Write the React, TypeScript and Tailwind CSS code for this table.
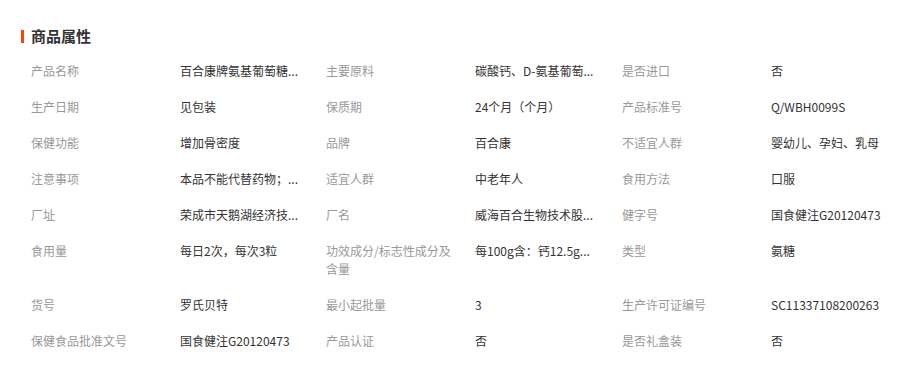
import * as React from 'react'

type Attr = { label: string; value: string }

// values are shown as the page shows them: cut short with "..."
const ROWS: Attr[][] = [
  [
    { label: '产品名称', value: '百合康牌氨基葡萄糖...' },
    { label: '主要原料', value: '碳酸钙、D-氨基葡萄...' },
    { label: '是否进口', value: '否' },
  ],
  [
    { label: '生产日期', value: '见包装' },
    { label: '保质期', value: '24个月（个月）' },
    { label: '产品标准号', value: 'Q/WBH0099S' },
  ],
  [
    { label: '保健功能', value: '增加骨密度' },
    { label: '品牌', value: '百合康' },
    { label: '不适宜人群', value: '婴幼儿、孕妇、乳母' },
  ],
  [
    { label: '注意事项', value: '本品不能代替药物；...' },
    { label: '适宜人群', value: '中老年人' },
    { label: '食用方法', value: '口服' },
  ],
  [
    { label: '厂址', value: '荣成市天鹅湖经济技...' },
    { label: '厂名', value: '威海百合生物技术股...' },
    { label: '健字号', value: '国食健注G20120473' },
  ],
  [
    { label: '食用量', value: '每日2次，每次3粒' },
    { label: '功效成分/标志性成分及含量', value: '每100g含：钙12.5g...' },
    { label: '类型', value: '氨糖' },
  ],
  [
    { label: '货号', value: '罗氏贝特' },
    { label: '最小起批量', value: '3' },
    { label: '生产许可证编号', value: 'SC11337108200263' },
  ],
  [
    { label: '保健食品批准文号', value: '国食健注G20120473' },
    { label: '产品认证', value: '否' },
    { label: '是否礼盒装', value: '否' },
  ],
]

const CELL_WIDTHS = ['w-[295px]', 'w-[296px]', 'w-[296px]']

export default function App() {
  return (
    <div
      className="w-[906px] h-[367px] bg-white pt-[26px] pl-[21px] overflow-hidden"
      style={{ fontFamily: '"Noto Sans CJK SC", "Noto Sans", sans-serif' }}
    >
      {/* Title */}
      <div className="flex items-center h-[20px]">
        <span className="w-[3px] h-[13px] bg-[#ff4400] mr-[7px]" />
        <span className="text-[15px] font-bold text-[#333] leading-[20px]">商品属性</span>
      </div>

      {/* Attribute grid */}
      <div className="mt-[7px]">
        {ROWS.map((row, i) => (
          <div key={i} className="flex">
            {row.map((attr, j) => (
              <div
                key={j}
                className={`flex shrink-0 pl-[10px] py-[9px] text-[12px] leading-[18px] ${CELL_WIDTHS[j]}`}
              >
                <div className="w-[149px] pr-[19px] text-[#999] shrink-0">{attr.label}</div>
                <div className="w-[126px] text-[#333] whitespace-nowrap">{attr.value}</div>
              </div>
            ))}
          </div>
        ))}
      </div>
    </div>
  )
}
